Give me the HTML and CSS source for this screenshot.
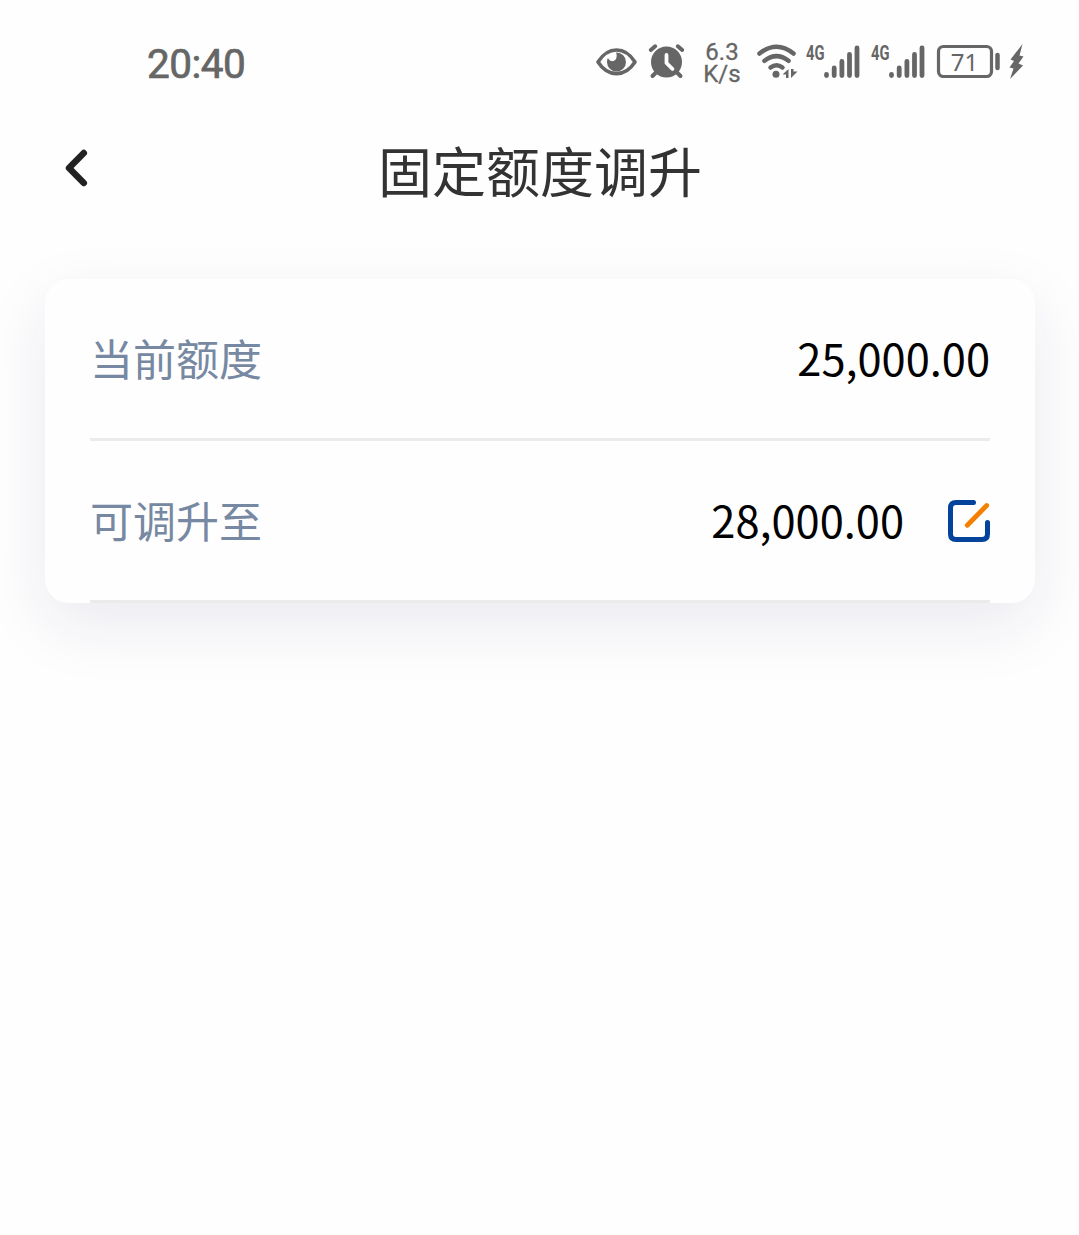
FILE: index.html
```html
<!DOCTYPE html>
<html lang="zh-CN">
<head>
    <meta charset="UTF-8">
    <title>固定额度调升</title>
    <link rel="stylesheet" href="styles.css">
</head>
<body>
    <!-- 状态栏 -->
    <div class="status-bar">
        <span class="time">20:40</span>
        <div class="status-icons">
            <svg class="icon-eye" width="41" height="36" viewBox="0 0 41 36">
                <path d="M2 18C12 2 29 2 39 18C29 33.500 12 33.500 2 18Z" fill="none" stroke="#666" stroke-width="3.600" stroke-linejoin="round"/>
                <path d="M20.500 8.500A9.500 9.500 0 1 1 11 18C11 16.500 11.400 15 12 14C13 16.500 15 17.500 17.500 17C20.500 16.300 21.500 12 20 8.500Z" fill="#666"/>
            </svg>
            <svg class="icon-alarm" width="36" height="36" viewBox="0 0 36 36">
                <circle cx="17.500" cy="18" r="15.500" fill="#666"/>
                <path d="M1.800 6L6.200 2.300M28.800 2.300L33.200 6M7 28.500L3.500 32M28 28.500L31.500 32" stroke="#666" stroke-width="4" stroke-linecap="round"/>
                <path d="M17.500 11V19L23.500 25" fill="none" stroke="#fefefe" stroke-width="3.800" stroke-linecap="round" stroke-linejoin="round"/>
            </svg>
            <div class="speed">6.3<br>K/s</div>
            <svg class="icon-wifi" width="41" height="36" viewBox="0 0 41 36">
                <g fill="none" stroke="#666" stroke-width="4.500" stroke-linecap="round">
                    <path d="M2.500 9.500Q19.500-4 36.500 9.500"/>
                    <path d="M7.500 16.800Q19.500 7.500 31.500 16.800"/>
                    <path d="M13.500 23.500Q19.500 19 25.500 23.500"/>
                </g>
                <circle cx="19" cy="30.300" r="3.500" fill="#666"/>
                <path d="M25.500 30.500L31.500 25V34H29V30.500ZM34 34V25H36.500V27.500H40.500Z" fill="#666"/>
            </svg>
            <svg class="icon-signal" width="54" height="36" viewBox="0 0 54 36">
                <text class="net" x="0" y="15.500" textLength="18.500" lengthAdjust="spacingAndGlyphs">4G</text>
                <path d="M20.500 30.500V31.500M28.200 24V31.500M35.900 17.500V31.500M43.500 10.500V31.500M51 4V31.500" stroke="#666" stroke-width="4.800" stroke-linecap="round"/>
            </svg>
            <svg class="icon-signal" width="54" height="36" viewBox="0 0 54 36">
                <text class="net" x="0" y="15.500" textLength="18.500" lengthAdjust="spacingAndGlyphs">4G</text>
                <path d="M20.500 30.500V31.500M28.200 24V31.500M35.900 17.500V31.500M43.500 10.500V31.500M51 4V31.500" stroke="#666" stroke-width="4.800" stroke-linecap="round"/>
            </svg>
            <svg class="icon-battery" width="64" height="36" viewBox="0 0 64 36">
                <rect x="1.500" y="2.500" width="53" height="30" rx="5" fill="none" stroke="#666" stroke-width="3.200"/>
                <path d="M60.500 11V24" stroke="#666" stroke-width="4.500" stroke-linecap="round"/>
                <text class="level" x="27.500" y="26.500" text-anchor="middle">71</text>
            </svg>
            <svg class="icon-bolt" width="16" height="36" viewBox="0 0 16 36">
                <path d="M13.500 0L1.500 15.500L5 17L0.500 23.500L4.500 24.500L1 35L14 21.500L9.500 19.500L14.500 12.500L10.500 11.500Z" fill="#666"/>
            </svg>
        </div>
    </div>

    <!-- 标题栏 -->
    <div class="header">
        <svg class="back" width="24" height="38" viewBox="0 0 24 38">
            <path d="M19.800 4L5 19L19.800 34" fill="none" stroke="#222" stroke-width="6.500" stroke-linecap="round" stroke-linejoin="round"/>
        </svg>
        <h1>固定额度调升</h1>
    </div>

    <!-- 额度信息 -->
    <div class="card">
        <div class="row">
            <span class="label">当前额度</span>
            <span class="amount">25,000.00</span>
        </div>
        <div class="row">
            <span class="label">可调升至</span>
            <span class="amount">28,000.00</span>
            <svg class="edit" width="42" height="42" viewBox="0 0 42 42">
                <path d="M25.500 2.500H8Q2.500 2.500 2.500 8V34Q2.500 39.500 8 39.500H34Q39.500 39.500 39.500 34V22.500" fill="none" stroke="#03439b" stroke-width="5" stroke-linecap="round"/>
                <path d="M19.300 25.200L38.700 5.500" stroke="#f57f00" stroke-width="4.800" stroke-linecap="round"/>
            </svg>
        </div>
    </div>
</body>
</html>
```
FILE: styles.css
```css
* { box-sizing: border-box; }
body { margin: 0; min-height: 1235px; background: #fefefe; font-family: "Noto Sans CJK SC", sans-serif; }
svg { overflow: visible; }
.status-bar { display: flex; justify-content: space-between; height: 124px; padding: 44px 54px 0 147px; color: #666; }
.time { font-family: Roboto, sans-serif; font-size: 40.5px; font-weight: 400; line-height: 41px; letter-spacing: -0.5px; -webkit-text-stroke: 0.7px #666; }
.status-icons { display: flex; height: 36px; }
.icon-alarm { margin-left: 12px; }
.speed { width: 38px; margin: -3px 0 0 18px; font-family: Roboto, sans-serif; font-size: 24px; line-height: 22px; text-align: center; -webkit-text-stroke: 0.3px #666; }
.icon-wifi { margin-left: 16px; }
.icon-signal { margin-left: 8px; }
.icon-signal + .icon-signal { margin-left: 11px; }
.icon-battery { margin-left: 12px; }
.icon-bolt { margin-left: 8px; }
.net { font-family: Roboto, sans-serif; font-size: 21px; font-weight: 700; fill: #666; }
.level { font-family: "Noto Sans", sans-serif; font-size: 24px; fill: #666; }
.header { display: grid; grid-template-columns: 1fr auto 1fr; align-items: center; height: 96px; padding: 0 63px 0 64px; }
.back { margin-top: -8px; }
h1 { margin: -5px 0 0; color: #333; font-size: 54px; font-weight: 400; line-height: 80px; }
.card { margin: 59px 44px 0 45px; padding: 0 45px; height: 324px; border-radius: 24px; background: #fefefe; box-shadow: 0 22px 66px rgba(30, 35, 100, 0.09); }
.row { display: flex; align-items: center; height: 162px; border-bottom: 3px solid #ebebeb; }
.label { margin-top: -4px; color: #7788a2; font-size: 43px; }
.amount { margin: -4px 0 0 auto; color: #000; font-size: 43.4px; }
.edit { margin-left: 44px; }
```
